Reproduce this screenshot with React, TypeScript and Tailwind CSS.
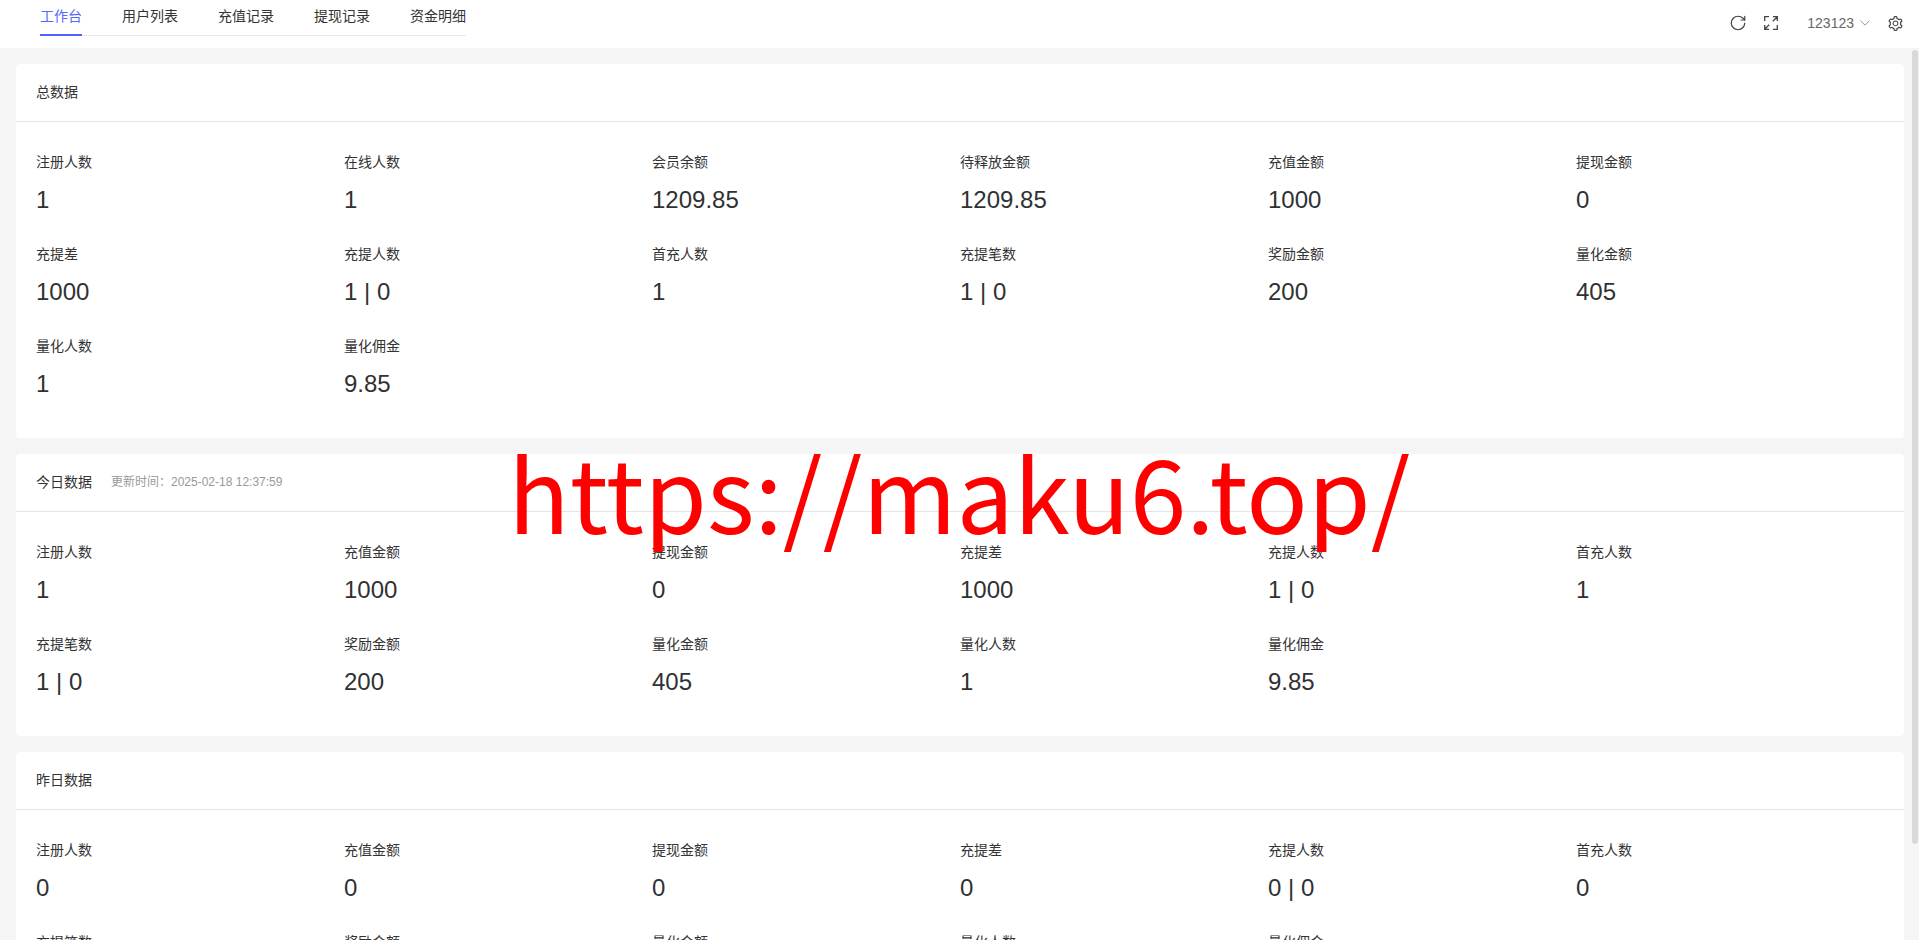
import { RotateCw } from "lucide-react";
import { AiOutlineSetting } from "react-icons/ai";

const tabs = ["工作台", "用户列表", "充值记录", "提现记录", "资金明细"];

type Item = [string, string];

const total: Item[] = [
  ["注册人数", "1"], ["在线人数", "1"], ["会员余额", "1209.85"], ["待释放金额", "1209.85"], ["充值金额", "1000"], ["提现金额", "0"],
  ["充提差", "1000"], ["充提人数", "1 | 0"], ["首充人数", "1"], ["充提笔数", "1 | 0"], ["奖励金额", "200"], ["量化金额", "405"],
  ["量化人数", "1"], ["量化佣金", "9.85"],
];
const today: Item[] = [
  ["注册人数", "1"], ["充值金额", "1000"], ["提现金额", "0"], ["充提差", "1000"], ["充提人数", "1 | 0"], ["首充人数", "1"],
  ["充提笔数", "1 | 0"], ["奖励金额", "200"], ["量化金额", "405"], ["量化人数", "1"], ["量化佣金", "9.85"],
];
const yesterday: Item[] = [
  ["注册人数", "0"], ["充值金额", "0"], ["提现金额", "0"], ["充提差", "0"], ["充提人数", "0 | 0"], ["首充人数", "0"],
  ["充提笔数", "0 | 0"], ["奖励金额", "0"], ["量化金额", "0"], ["量化人数", "0"], ["量化佣金", "0"],
];

function Card({ title, time, items }: { title: string; time?: string; items: Item[] }) {
  return (
    <section className="bg-white rounded-[4px]">
      <div className="h-[58px] border-b border-[#e4e4e9] px-5 pb-[2px] flex items-center">
        <span className="text-sm text-[#333]">{title}</span>
        {time && <span className="ml-[19px] text-xs text-[#999]">{time}</span>}
      </div>
      <div className="p-5 grid grid-cols-6">
        {items.map(([label, value]) => (
          <div key={label} className="h-[92px]">
            <div className="text-sm leading-[22px] pt-[9px] h-[31px] text-[#333]">{label}</div>
            <div className="text-2xl leading-[32px] mt-[11px] text-[#303133]">{value}</div>
          </div>
        ))}
      </div>
    </section>
  );
}

export default function App() {
  return (
    <div className="h-[940px] w-full overflow-hidden relative bg-[#f5f5f5] font-['Liberation_Sans','Noto_Sans_CJK_SC',sans-serif]">
      <header className="h-12 bg-white flex items-start pl-10 pr-[15px]">
        <nav className="h-9 flex items-start gap-10 border-b border-[#e8e8ec]">
          {tabs.map((t, i) => (
            <div
              key={t}
              className={
                i === 0
                  ? "h-9 text-sm leading-[32px] text-[#5468ff] border-b-2 border-[#4f63ff]"
                  : "h-9 text-sm leading-[32px] text-[#333]"
              }
            >
              {t}
            </div>
          ))}
        </nav>
        <div className="ml-auto h-[46px] flex items-center text-[#444]">
          <RotateCw size={18} strokeWidth={1.6} />
          <svg className="ml-[17px]" width="14" height="14" viewBox="0 0 14 14" fill="none" stroke="currentColor" strokeWidth="1.3">
            <path d="M.7 5V.7H5M9 .7h4.3V5M13.3.7 8.8 5.2M.7 9v4.3H5M.7 13.3l4.5-4.5M13.3 9v4.3H9" />
          </svg>
          <span className="ml-[29px] text-sm text-[#666]">123123</span>
          <svg className="ml-[6px] text-[#999]" width="10" height="6" viewBox="0 0 10 6" fill="none" stroke="currentColor" strokeWidth="1">
            <path d="M.4.6 5 5.2 9.6.6" />
          </svg>
          <AiOutlineSetting className="text-[17px] ml-[17px]" />
        </div>
      </header>
      <main className="h-[892px] overflow-hidden pt-4 pb-4 pl-4 pr-[15px] flex flex-col gap-4">
        <Card title="总数据" items={total} />
        <Card title="今日数据" time="更新时间：2025-02-18 12:37:59" items={today} />
        <Card title="昨日数据" items={yesterday} />
      </main>
      <div className="absolute left-[1912px] top-[50px] w-[6px] h-[794px] rounded-[3px] bg-[#d9d9d9]" />
      <div className="absolute left-[508px] top-[454px] h-[98px] overflow-hidden pointer-events-none">
        <div className="-mt-[13px] text-[101.6px] leading-[98px] text-[#ff0000] whitespace-nowrap font-['Noto_Sans_CJK_SC',sans-serif]">https://maku6.top/</div>
      </div>
    </div>
  );
}
